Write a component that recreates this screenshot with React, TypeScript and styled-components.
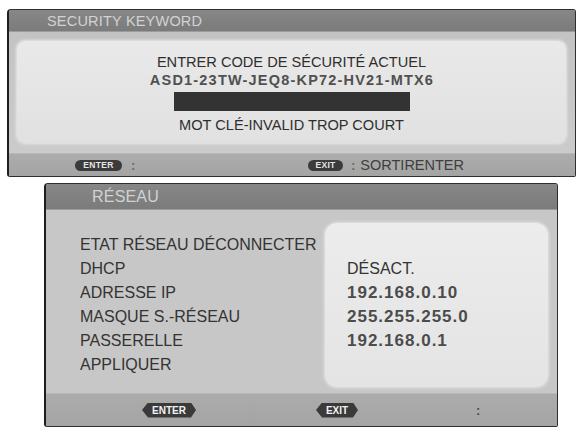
import styled, { createGlobalStyle } from "styled-components";

const GlobalStyle = createGlobalStyle`
  html, body {
    margin: 0;
    padding: 0;
    background: #ffffff;
  }
  body {
    font-family: "Liberation Sans", Arial, sans-serif;
  }
  * {
    box-sizing: border-box;
  }
`;

const labels = [
  "ETAT RÉSEAU DÉCONNECTER",
  "DHCP",
  "ADRESSE IP",
  "MASQUE S.-RÉSEAU",
  "PASSERELLE",
  "APPLIQUER",
];

const values = [
  { text: "DÉSACT.", bold: false },
  { text: "192.168.0.10", bold: true },
  { text: "255.255.255.0", bold: true },
  { text: "192.168.0.1", bold: true },
];

export default function App() {
  return (
    <Page>
      <GlobalStyle />

      {/* Fenêtre du mot de passe */}
      <Panel $offset={7} $width={569} $height={168}>
        <Header $h={22}>
          <Title $indent={38} $size={14.5}>SECURITY KEYWORD</Title>
        </Header>
        <KeywordBody>
          <InnerBox>
            <Line>ENTRER CODE DE SÉCURITÉ ACTUEL</Line>
            <Code>ASD1-23TW-JEQ8-KP72-HV21-MTX6</Code>
            <InputBar />
            <Line $gap={5}>MOT CLÉ-INVALID TROP COURT</Line>
          </InnerBox>
        </KeywordBody>
        <Footer $h={23} $indent={66}>
          <Slot $w={233}>
            <Pill $w={47} $h={11}>ENTER</Pill>
            <Hint $gap={9}>:</Hint>
          </Slot>
          <Slot>
            <Pill $w={35} $h={11}>EXIT</Pill>
            <Hint $gap={8}>:</Hint>
            <FooterText>SORTIRENTER</FooterText>
          </Slot>
        </Footer>
      </Panel>

      {/* Fenêtre réseau */}
      <Panel $offset={44} $width={514} $height={244} $top={6}>
        <Header $h={26}>
          <Title $indent={46} $size={16}>RÉSEAU</Title>
        </Header>
        <NetBody>
          <LabelColumn>
            {labels.map((l) => (
              <Row key={l}>{l}</Row>
            ))}
          </LabelColumn>
          <ValueBox>
            {values.map((v) => (
              <Row key={v.text} $value={v.bold}>
                {v.text}
              </Row>
            ))}
          </ValueBox>
        </NetBody>
        <Footer $h={33} $indent={96}>
          <Slot $w={174}>
            <Tag $w={54}>ENTER</Tag>
          </Slot>
          <Slot $w={160}>
            <Tag $w={42}>EXIT</Tag>
          </Slot>
          <Slot>
            <Hint $dark>:</Hint>
          </Slot>
        </Footer>
      </Panel>
    </Page>
  );
}

const Page = styled.div`
  width: 579px;
  height: 428px;
  padding-top: 9px;
  display: flex;
  flex-direction: column;
  overflow: hidden;
`;

const Panel = styled.div<{ $offset: number; $width: number; $height: number; $top?: number }>`
  margin-left: ${({ $offset }) => $offset}px;
  margin-top: ${({ $top }) => $top ?? 0}px;
  width: ${({ $width }) => $width}px;
  height: ${({ $height }) => $height}px;
  display: flex;
  flex-direction: column;
  background: #c6c6c6;
  border: 1px solid #2e2e2e;
  border-left: 2px solid #1e1e1e;
  border-radius: 4px 3px 2px 3px;
  overflow: hidden;
`;

const Header = styled.div<{ $h: number }>`
  height: ${({ $h }) => $h}px;
  flex: none;
  display: flex;
  align-items: center;
  background: linear-gradient(#878787, #7b7b7b);
  border-bottom: 1px solid #9c9c9c;
`;

const Title = styled.div<{ $indent: number; $size: number }>`
  padding-left: ${({ $indent }) => $indent}px;
  font-size: ${({ $size }) => $size}px;
  color: #d2d2d2;
  letter-spacing: 0.2px;
`;

const KeywordBody = styled.div`
  flex: 1;
  padding: 9px 9px 10px 8px;
  background: linear-gradient(#c3c3c3, #cbcbcb);
  display: flex;
`;

const InnerBox = styled.div`
  flex: 1;
  border-radius: 8px;
  background: linear-gradient(#e9e9e9, #e1e1e1);
  box-shadow: 0 0 3px 1px rgba(255, 255, 255, 0.6);
  display: flex;
  flex-direction: column;
  align-items: center;
  padding-top: 12px;
`;

const Line = styled.div<{ $gap?: number }>`
  margin-top: ${({ $gap }) => $gap ?? 0}px;
  height: 18px;
  line-height: 18px;
  font-size: 14.6px;
  color: #2e2e2e;
`;

const Code = styled.div`
  height: 18px;
  line-height: 18px;
  font-size: 14.5px;
  font-weight: bold;
  letter-spacing: 1.2px;
  color: #505050;
  padding-left: 1px;
`;

const InputBar = styled.div`
  margin-top: 3px;
  width: 236px;
  height: 19px;
  background: #333333;
`;

const Footer = styled.div<{ $h: number; $indent: number }>`
  height: ${({ $h }) => $h}px;
  flex: none;
  display: flex;
  align-items: center;
  padding-left: ${({ $indent }) => $indent}px;
  background: linear-gradient(#acacac, #a4a4a4);
  border-top: 1px solid #b8b8b8;
`;

const Slot = styled.div<{ $w?: number }>`
  width: ${({ $w }) => ($w ? `${$w}px` : "auto")};
  display: flex;
  align-items: center;
`;

const Pill = styled.span<{ $w: number; $h: number }>`
  width: ${({ $w }) => $w}px;
  height: ${({ $h }) => $h}px;
  border-radius: 6px;
  background: #3b3b3b;
  color: #e6e6e6;
  font-size: 8.5px;
  font-weight: bold;
  display: flex;
  align-items: center;
  justify-content: center;
  letter-spacing: 0.3px;
`;

const Tag = styled.span<{ $w: number }>`
  width: ${({ $w }) => $w}px;
  height: 15px;
  background: #3a3a3a;
  color: #f2f2f2;
  font-size: 10px;
  font-weight: bold;
  display: flex;
  align-items: center;
  justify-content: center;
  clip-path: polygon(6px 0, calc(100% - 5px) 0, 100% 50%, calc(100% - 5px) 100%, 6px 100%, 0 50%);
  border-radius: 3px;
`;

const Hint = styled.span<{ $dark?: boolean; $gap?: number }>`
  margin-left: ${({ $gap }) => $gap ?? 0}px;
  font-size: 13px;
  font-weight: bold;
  color: ${({ $dark }) => ($dark ? "#4a4a4a" : "#666666")};
`;

const FooterText = styled.span`
  margin-left: 5px;
  font-size: 14.5px;
  color: #3e3e3e;
`;

const NetBody = styled.div`
  flex: 1;
  display: flex;
  background: #c7c7c7;
`;

const LabelColumn = styled.div`
  width: 279px;
  padding: 23px 0 0 34px;
  display: flex;
  flex-direction: column;
`;

const ValueBox = styled.div`
  width: 223px;
  height: 164px;
  margin-top: 13px;
  padding: 34px 0 0 22px;
  border-radius: 12px;
  background: linear-gradient(#ececec, #e4e4e4);
  box-shadow: 0 0 3px 1px rgba(255, 255, 255, 0.5);
  display: flex;
  flex-direction: column;
`;

const Row = styled.div<{ $value?: boolean }>`
  height: 24px;
  line-height: 24px;
  white-space: nowrap;
  font-size: ${({ $value }) => ($value ? "17px" : "16px")};
  font-weight: ${({ $value }) => ($value ? "bold" : "normal")};
  letter-spacing: ${({ $value }) => ($value ? "1px" : "0")};
  color: ${({ $value }) => ($value ? "#4c4c4c" : "#333333")};
`;
